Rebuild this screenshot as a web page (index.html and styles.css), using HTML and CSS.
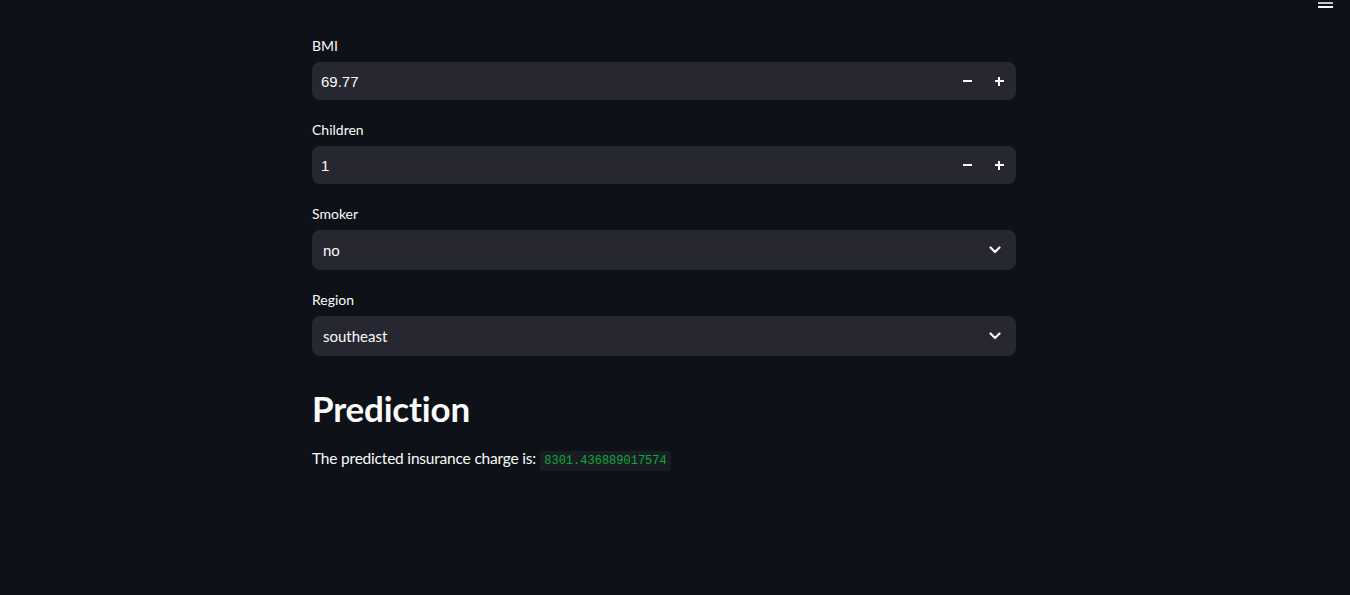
FILE: index.html
```html
<!DOCTYPE html>
<html lang="en">
<head>
<meta charset="utf-8">
<title>Insurance Charge Prediction</title>
<link rel="stylesheet" href="styles.css">
</head>
<body>
<header class="topbar">
  <span class="menu-bar menu-bar-dim"></span>
  <span class="menu-bar"></span>
</header>
<main class="main">
  <div class="widget">
    <label class="label">BMI</label>
    <div class="number-input">
      <span class="value">69.77</span>
      <button class="step" aria-label="decrement"><span class="minus"></span></button>
      <button class="step" aria-label="increment"><span class="plus"></span></button>
    </div>
  </div>
  <div class="widget">
    <label class="label">Children</label>
    <div class="number-input">
      <span class="value">1</span>
      <button class="step" aria-label="decrement"><span class="minus"></span></button>
      <button class="step" aria-label="increment"><span class="plus"></span></button>
    </div>
  </div>
  <div class="widget">
    <label class="label">Smoker</label>
    <div class="select">
      <span class="select-value">no</span>
      <svg class="chevron" width="12" height="8" viewBox="0 0 12 8"><path d="M1.5 1.5 L6 6 L10.5 1.5" fill="none" stroke="#fafafa" stroke-width="2.2" stroke-linecap="round" stroke-linejoin="round"/></svg>
    </div>
  </div>
  <div class="widget">
    <label class="label">Region</label>
    <div class="select">
      <span class="select-value">southeast</span>
      <svg class="chevron" width="12" height="8" viewBox="0 0 12 8"><path d="M1.5 1.5 L6 6 L10.5 1.5" fill="none" stroke="#fafafa" stroke-width="2.2" stroke-linecap="round" stroke-linejoin="round"/></svg>
    </div>
  </div>
  <h2 class="heading">Prediction</h2>
  <p class="result">The predicted insurance charge is: <code class="code">8301.436889017574</code></p>
</main>
</body>
</html>
```
FILE: styles.css
```css
* { box-sizing: border-box; }
html, body { margin: 0; padding: 0; }
body {
  background: #0e1117;
  color: #fafafa;
  font-family: Lato, "Noto Sans", sans-serif;
  height: 595px;
  overflow: hidden;
}
.topbar {
  position: absolute;
  top: 2px;
  left: 1318px;
  display: flex;
  flex-direction: column;
  gap: 2px;
}
.menu-bar {
  display: block;
  width: 15px;
  height: 2px;
  background: #fafafa;
}
.menu-bar-dim { background: #c4c4c4; }
.main {
  width: 704px;
  margin-left: 312px;
  padding-top: 32px;
  display: flex;
  flex-direction: column;
}
.widget {
  display: flex;
  flex-direction: column;
  margin-bottom: 16px;
}
.label {
  font-size: 14px;
  line-height: 21px;
  padding-top: 3px;
  margin-bottom: 6px;
  color: #fafafa;
}
.number-input {
  height: 38px;
  background: #262730;
  border-radius: 8px;
  display: flex;
  align-items: center;
  padding-right: 1px;
}
.value {
  flex: 1;
  padding-left: 9px;
  font-family: "Liberation Sans", Arial, sans-serif;
  font-size: 15px;
  color: #fafafa;
}
.step {
  width: 32px;
  height: 100%;
  border: none;
  background: transparent;
  padding: 0;
  display: flex;
  align-items: center;
  justify-content: center;
}
.minus, .plus {
  display: block;
  width: 9px;
  height: 2px;
  background: #fafafa;
  position: relative;
}
.plus::after {
  content: "";
  position: absolute;
  left: 3.5px;
  top: -3.5px;
  width: 2px;
  height: 9px;
  background: #fafafa;
}
.select {
  height: 40px;
  background: #262730;
  border-radius: 8px;
  display: flex;
  align-items: center;
  padding: 0 15px 0 11px;
}
.select-value {
  flex: 1;
  font-size: 15px;
  color: #fafafa;
}
.chevron { display: block; }
.heading {
  margin: 10px 0 0;
  font-size: 35px;
  font-weight: 700;
  line-height: 52px;
  letter-spacing: -0.2px;
}
.result {
  margin: 12px 0 0;
  font-size: 15.5px;
  letter-spacing: -0.2px;
  line-height: 24px;
}
.code {
  font-family: "Liberation Mono", "DejaVu Sans Mono", monospace;
  font-size: 12px;
  letter-spacing: 0;
  color: #09ab3b;
  background: #1a1c24;
  padding: 3px 4.5px;
  border-radius: 4px;
}
```
